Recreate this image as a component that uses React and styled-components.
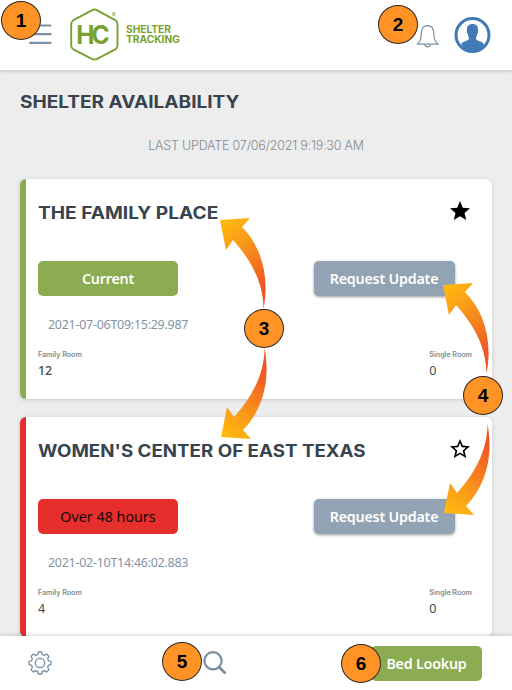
import React from "react";
import styled, { createGlobalStyle } from "styled-components";

const GlobalStyle = createGlobalStyle`
  *, *::before, *::after { box-sizing: border-box; }
  body { margin: 0; background: #ededed; font-family: "Noto Sans", "Open Sans", sans-serif; }
  button { font-family: inherit; border: 0; padding: 0; cursor: pointer; }
  svg { display: block; flex: none; }
`;

const Page = styled.div`
  position: relative;
  display: flex;
  flex-direction: column;
  width: 512px;
  height: 690px;
  overflow: hidden;
  background: #ededed;
`;

const Header = styled.header`
  display: flex;
  align-items: flex-start;
  flex: none;
  height: 70px;
  padding: 0 21px 0 28px;
  background: #fff;
  box-shadow: 0 1px 4px rgba(0, 0, 0, 0.2);
  z-index: 1;
`;

const MenuButton = styled.button`
  margin: 24px 18px 0 0;
  background: none;
`;

const Brand = styled.div`
  display: flex;
  align-items: flex-start;
  flex: 1;
`;

const BrandName = styled.div`
  margin: 25px 0 0 6px;
  font: 700 9.8px/10px Inter, sans-serif;
  color: #78a22f;
  white-space: nowrap;
  transform: scaleX(1.04);
  transform-origin: 0 0;
`;

const HeaderActions = styled.div`
  display: flex;
  gap: 14px;
  padding-top: 17px;
`;

const BellSlot = styled.span`
  padding-top: 7px;
`;

const Main = styled.main`
  flex: 1;
  min-height: 0;
  overflow: hidden;
  padding: 21px 20px 0;
`;

const Title = styled.h2`
  margin: 0;
  width: max-content;
  font: 700 17px/22px Inter, sans-serif;
  color: #37434d;
  white-space: nowrap;
  transform: scaleX(${(p) => p.$stretch});
  transform-origin: 0 50%;
`;

const LastUpdate = styled.p`
  margin: 23px 0 24px;
  text-align: center;
  font: 300 12.5px/19px Inter, sans-serif;
  letter-spacing: -0.2px;
  color: #858b90;
`;

const Card = styled.section`
  height: 220px;
  margin-bottom: 18px;
  padding: 23px 20px 0 12px;
  border-left: 6px solid ${(p) => p.$accent};
  border-radius: 6px;
  background: #fff;
  box-shadow: 0 1px 4px rgba(0, 0, 0, 0.16);
`;

const CardHead = styled.div`
  display: flex;
  justify-content: space-between;
  height: 59px;

  svg { margin-top: -3px; }
`;

const ActionRow = styled.div`
  display: flex;
  justify-content: space-between;
  padding-right: 17.5px;
`;

const Button = styled.button`
  width: ${(p) => p.$width}px;
  height: 35px;
  border-radius: 5px;
  background: ${(p) => p.$fill};
  color: ${(p) => p.$ink || "#fff"};
  font-size: 14.3px;
  line-height: 20px;
  font-weight: ${(p) => p.$weight || 600};
  letter-spacing: ${(p) => (p.$weight === 400 ? 0 : -0.22)}px;
  box-shadow: ${(p) => (p.$raised ? "0 1px 3px rgba(0, 0, 0, 0.4)" : "none")};
`;

const Timestamp = styled.div`
  margin: 19px 0 0 10px;
  font-size: 12.5px;
  line-height: 20px;
  letter-spacing: -0.28px;
  color: #8195a5;
`;

const Rooms = styled.div`
  display: flex;
  justify-content: space-between;
  margin-top: 15px;
`;

const RoomLabel = styled.div`
  font: 600 7.2px/9px Inter, sans-serif;
  letter-spacing: -0.05px;
  color: #7f8d92;
`;

const RoomCount = styled.div`
  margin-top: 3px;
  font-size: 12.5px;
  line-height: 18px;
  letter-spacing: -0.2px;
  font-weight: ${(p) => (p.$strong ? 500 : 400)};
  color: #424a50;
`;

const Footer = styled.footer`
  display: flex;
  align-items: flex-start;
  flex: none;
  height: 54px;
  padding: 10px 30px 0 28px;
  background: #fff;
  box-shadow: 0 -1px 4px rgba(0, 0, 0, 0.16);
  z-index: 1;

  button { margin-left: auto; }
`;

const FooterIcon = styled.span`
  padding: ${(p) => p.$pad};
`;

/* Numbered call-outs float above the interface. */
const Callout = styled.div`
  position: absolute;
  z-index: 3;
  left: ${(p) => p.$x - 20}px;
  top: ${(p) => p.$y - 19.5}px;
  width: 40px;
  height: 39px;
  border: 1px solid #302a24;
  border-radius: 50%;
  background: #ff9326;
  color: #000;
  font: 700 19px/38px "Liberation Sans", Arial, sans-serif;
  text-align: center;
`;

const ArrowLayer = styled.div`
  position: absolute;
  z-index: 2;
  left: ${(p) => p.$x}px;
  top: ${(p) => p.$y}px;
  transform: ${(p) => (p.$down ? "scaleY(-1)" : "none")};
`;

function Arrow({ id, x, y, down }) {
  return (
    <ArrowLayer $x={x} $y={y} $down={down}>
      <svg width="48" height="92" viewBox="0 0 48 92">
        <defs>
          <linearGradient id={id} gradientUnits="userSpaceOnUse" x1="4" y1="4" x2="45" y2="68">
            <stop offset="0" stopColor="#ffb80f" />
            <stop offset="0.35" stopColor="#fa9b1a" />
            <stop offset="1" stopColor="#ee5524" />
          </linearGradient>
        </defs>
        <path
          d="M0 2 30 0 22 9C41 28 50 58 43.5 91C43.5 66 32 43 13 22L6 32Z"
          fill={`url(#${id})`}
        />
      </svg>
    </ArrowLayer>
  );
}

const MenuIcon = () => (
  <svg width="24" height="21" viewBox="0 0 24 21" stroke="#7890a3" strokeWidth="2.2" strokeLinecap="round">
    <path d="M2 1.5H22.5M2 10.2H22.5M2 18.8H22.5" />
  </svg>
);

const Logo = () => (
  <svg width="50" height="61" viewBox="0 0 50 61">
    <path
      d="M21.8 10.3Q24.5 8.8 27.2 10.3L45.2 20.2Q47.5 21.5 47.5 24V45.4Q47.5 48 45.2 49.3L27.2 58.8Q24.5 60.2 21.8 58.8L3.4 49.3Q1.2 48 1.2 45.4V24Q1.2 21.5 3.4 20.2Z"
      fill="none"
      stroke="#78a22f"
      strokeWidth="1.9"
    />
    <text
      transform="translate(6.2 44) scale(0.96 1)"
      fill="#78a22f"
      fontFamily="Inter, sans-serif"
      fontWeight="700"
      fontSize="25.5"
      letterSpacing="-3.2"
    >
      HC
    </text>
    <text x="41.8" y="17" fill="#78a22f" fontFamily="Inter, sans-serif" fontSize="6">®</text>
  </svg>
);

const BellIcon = () => (
  <svg width="24" height="24" viewBox="0 0 24 24" fill="none" stroke="#7890a3" strokeWidth="1.2">
    <path d="M1.3 20.2C4.8 17.2 5 14 5.4 8.5C5.7 4.2 7.7 1.6 11.5 1.6S17.4 4.2 17.7 8.5C18.1 14 18.3 17.2 22.2 20.2Z" strokeLinejoin="round" />
    <path d="M8.7 20.5C9.4 23.6 13.8 23.6 14.5 20.5" />
  </svg>
);

const AvatarIcon = () => (
  <svg width="37" height="37" viewBox="0 0 37 37">
    <circle cx="18.5" cy="18" r="16.5" fill="#fff" stroke="#427ab8" strokeWidth="3" />
    <path
      d="M18.5 7C14.8 7 13 9.2 13 12.3C13 13.4 12.6 13.7 12.8 14.8C12.9 15.8 13.5 16.3 13.8 17C14.2 19.3 15 20.3 15 21.8C15 24.2 9.6 23.6 7.2 27C9.2 32 14 34.5 18.5 34.5S27.8 32 29.8 27C27.4 23.6 22 24.2 22 21.8C22 20.3 22.8 19.3 23.2 17C23.5 16.3 24.1 15.8 24.2 14.8C24.4 13.7 24 13.4 24 12.3C24 9.2 22.2 7 18.5 7Z"
      fill="#427ab8"
    />
  </svg>
);

const StarIcon = ({ filled }) => (
  <svg width="24" height="24" viewBox="0 0 24 24">
    {filled ? (
      <path d="M12 17.27 18.18 21l-1.64-7.03L22 9.24l-7.19-.61L12 2 9.19 8.63 2 9.24l5.46 4.73L5.82 21z" />
    ) : (
      <path d="m22 9.24-7.19-.62L12 2 9.19 8.63 2 9.24l5.46 4.73L5.82 21 12 17.27 18.18 21l-1.63-7.03zM12 15.4l-3.76 2.27 1-4.28-3.32-2.88 4.38-.38L12 6.1l1.71 4.04 4.38.38-3.32 2.88 1 4.28z" />
    )}
  </svg>
);

const GearIcon = () => (
  <svg width="24" height="24" viewBox="0 0 24 24" fill="none" stroke="#7890a3" strokeWidth="1.3" strokeLinejoin="round">
    <circle cx="12" cy="12" r="4.7" />
    <path d="M10.3 1H13.7L14.2 3.5Q15.4 3.8 16.5 4.4L18.6 3L21 5.4L19.6 7.5Q20.2 8.6 20.5 9.8L23 10.3V13.7L20.5 14.2Q20.2 15.4 19.6 16.5L21 18.6L18.6 21L16.5 19.6Q15.4 20.2 14.2 20.5L13.7 23H10.3L9.8 20.5Q8.6 20.2 7.5 19.6L5.4 21L3 18.6L4.4 16.5Q3.8 15.4 3.5 14.2L1 13.7V10.3L3.5 9.8Q3.8 8.6 4.4 7.5L3 5.4L5.4 3L7.5 4.4Q8.6 3.8 9.8 3.5Z" />
  </svg>
);

const SearchIcon = () => (
  <svg width="24" height="24" viewBox="0 0 24 24" fill="none" stroke="#7890a3" strokeWidth="2.3">
    <circle cx="10" cy="9.8" r="8.6" />
    <path d="M16 16 22.5 22.5" strokeWidth="2.8" />
  </svg>
);

const shelters = [
  {
    name: "THE FAMILY PLACE",
    stretch: 1.125,
    accent: "#8bac50",
    status: "Current",
    ink: "#fff",
    weight: 600,
    time: "2021-07-06T09:15:29.987",
    family: "12",
    single: "0",
    favorite: true,
  },
  {
    name: "WOMEN'S CENTER OF EAST TEXAS",
    stretch: 1.102,
    accent: "#e62e2d",
    status: "Over 48 hours",
    ink: "#160606",
    weight: 400,
    time: "2021-02-10T14:46:02.883",
    family: "4",
    single: "0",
    favorite: false,
  },
];

function ShelterCard({ shelter }) {
  return (
    <Card $accent={shelter.accent}>
      <CardHead>
        <Title as="h3" $stretch={shelter.stretch}>{shelter.name}</Title>
        <StarIcon filled={shelter.favorite} />
      </CardHead>
      <ActionRow>
        <Button $width={140} $fill={shelter.accent} $ink={shelter.ink} $weight={shelter.weight}>
          {shelter.status}
        </Button>
        <Button $width={141} $fill="#92a4b3" $raised>Request Update</Button>
      </ActionRow>
      <Timestamp>{shelter.time}</Timestamp>
      <Rooms>
        <div>
          <RoomLabel>Family Room</RoomLabel>
          <RoomCount $strong={shelter.favorite}>{shelter.family}</RoomCount>
        </div>
        <div>
          <RoomLabel>Single Room</RoomLabel>
          <RoomCount>{shelter.single}</RoomCount>
        </div>
      </Rooms>
    </Card>
  );
}

const callouts = [
  [21, 20.5],
  [398, 24.5],
  [264, 328.5],
  [483, 395.5],
  [182, 661.5],
  [361, 663.5],
];

export default function App() {
  return (
    <Page>
      <GlobalStyle />
      <Header>
        <MenuButton aria-label="Menu"><MenuIcon /></MenuButton>
        <Brand>
          <Logo />
          <BrandName>SHELTER<br />TRACKING</BrandName>
        </Brand>
        <HeaderActions>
          <BellSlot><BellIcon /></BellSlot>
          <AvatarIcon />
        </HeaderActions>
      </Header>
      <Main>
        <Title as="h1" $stretch={1.12}>SHELTER AVAILABILITY</Title>
        <LastUpdate>LAST UPDATE 07/06/2021 9:19:30 AM</LastUpdate>
        {shelters.map((s) => <ShelterCard key={s.name} shelter={s} />)}
      </Main>
      <Footer>
        <FooterIcon $pad="5px 0 0"><GearIcon /></FooterIcon>
        <FooterIcon $pad="5px 0 0 151px"><SearchIcon /></FooterIcon>
        <Button $width={111} $fill="#8bac50">Bed Lookup</Button>
      </Footer>
      <Arrow id="a1" x={220} y={218} />
      <Arrow id="a2" x={221} y={347} down />
      <Arrow id="a3" x={443} y={283} />
      <Arrow id="a4" x={443.5} y={423} down />
      {callouts.map(([x, y], i) => <Callout key={i} $x={x} $y={y}>{i + 1}</Callout>)}
    </Page>
  );
}
